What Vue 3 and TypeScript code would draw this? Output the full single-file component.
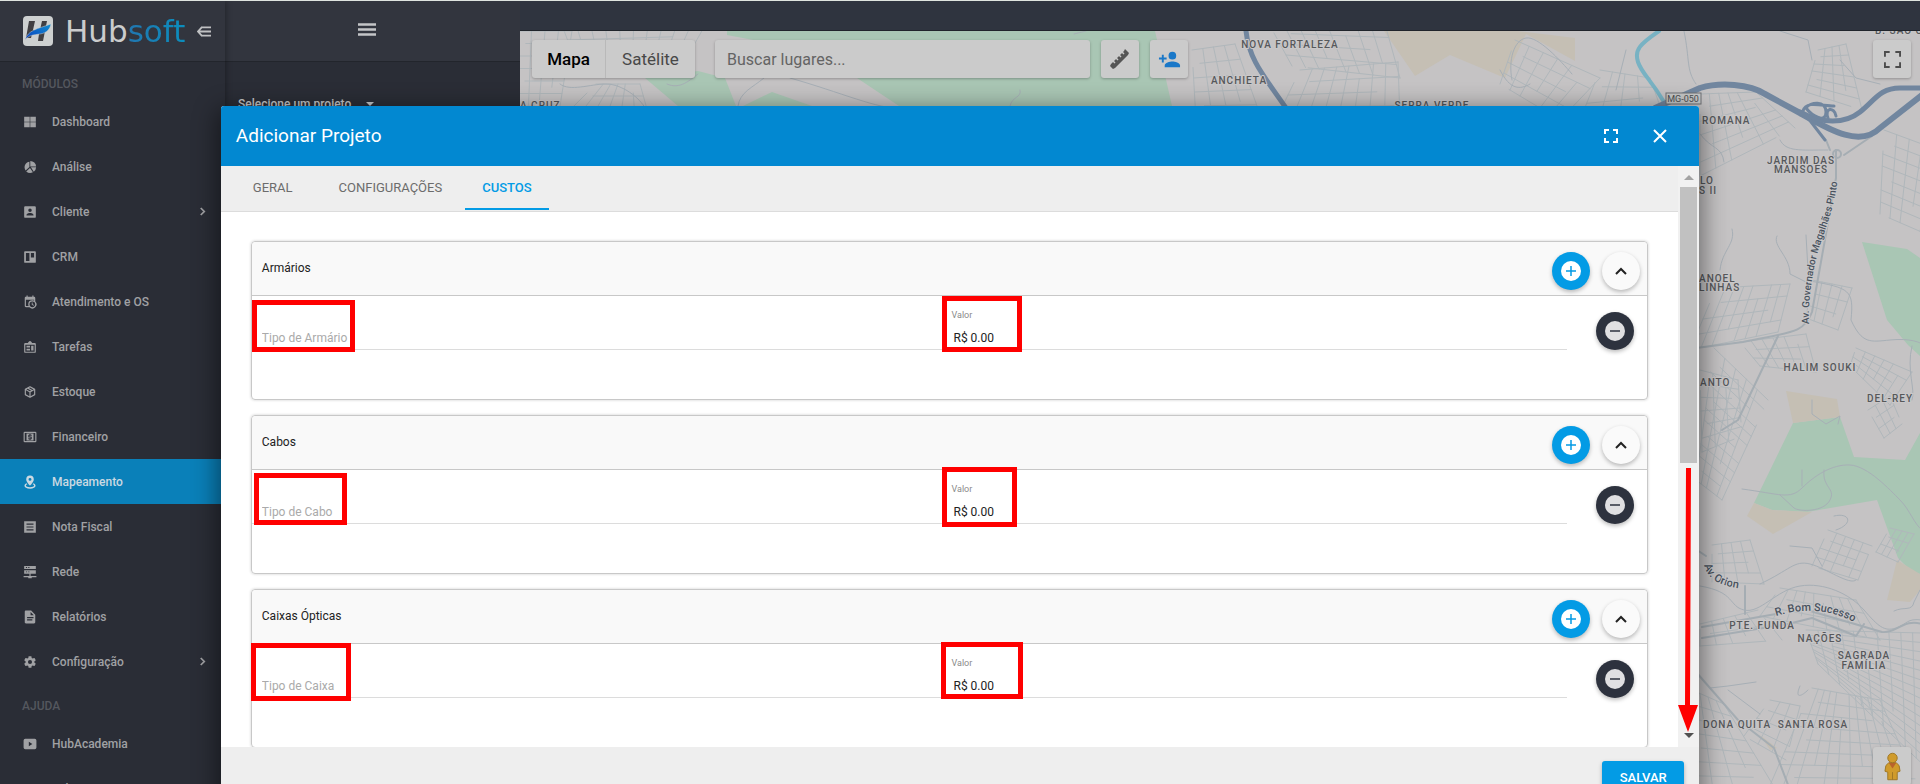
<script setup lang="ts">
import { ref } from 'vue'

interface NavItem { label: string; icon: string; more?: boolean; active?: boolean }
interface Mark { left: number; top: number; width: number; height: number }
interface CostCard { title: string; kind: string; value: string; kindMark: Mark; valueMark: Mark }
type Point = [number, number]
interface Blocks { corners: [Point, Point, Point, Point]; cols: number; rows: number }
interface PlaceLabel { x: number; y: number; text: string; start?: boolean }

const modules: NavItem[] = [
  { label: 'Dashboard', icon: 'M2 3h9.500v8.500H2zM12.500 3H22v8.500h-9.500zM2 12.500h9.500V21H2zM12.500 12.500H22V21h-9.500z' },
  { label: 'Análise', icon: 'M11 3V12L4.500 18A9.500 9.500 0 0 1 11 3zM12.500 1.500A10 10 0 0 1 22.500 11H12.500zM22.500 12.500a10 10 0 0 1-4 7.500L13.500 12.500zM12 13.500L17 21A10 10 0 0 1 5.500 19.500z' },
  { label: 'Cliente', more: true, icon: 'M6 17C6 15 10 13.900 12 13.900S18 15 18 17V18H6M15 9A3 3 0 0 1 12 12A3 3 0 0 1 9 9A3 3 0 0 1 15 9M2 4V20A2 2 0 0 0 4 22H20A2 2 0 0 0 22 20V4A2 2 0 0 0 20 2H4C2.900 2 2 2.900 2 4Z' },
  { label: 'CRM', icon: 'M3.500 2H20.500A1.500 1.500 0 0 1 22 3.500V20.500A1.500 1.500 0 0 1 20.500 22H3.500A1.500 1.500 0 0 1 2 20.500V3.500A1.500 1.500 0 0 1 3.500 2M5 5V19H11V5ZM13.500 5V13H19V5Z' },
  { label: 'Atendimento e OS', icon: 'M15 13H16.500V15.820L18.940 17.230L18.190 18.530L15 16.690V13M19 8H5V19H9.670C9.240 18.090 9 17.070 9 16A7 7 0 0 1 16 9C17.070 9 18.090 9.240 19 9.670V8M5 21C3.890 21 3 20.100 3 19V5C3 3.890 3.890 3 5 3H6V1H8V3H16V1H18V3H19A2 2 0 0 1 21 5V11.100A7 7 0 0 1 11.100 21H5M16 11.150A4.850 4.850 0 0 0 16 20.850A4.850 4.850 0 0 0 16 11.150Z' },
  { label: 'Tarefas', icon: 'M4 5H8.500C9 3.500 10.500 1.500 12 1.500S15 3.500 15.500 5H20A2 2 0 0 1 22 7V20A2 2 0 0 1 20 22H4A2 2 0 0 1 2 20V7A2 2 0 0 1 4 5M4 8V20H20V8ZM6 10H12V13H6ZM6 15H12V18H6ZM14 10H18V18H14Z' },
  { label: 'Estoque', icon: 'M21 16.500C21 16.900 20.800 17.200 20.500 17.400L12.600 21.800C12.200 22.100 11.800 22.100 11.400 21.800L3.500 17.400C3.200 17.200 3 16.900 3 16.500V7.500C3 7.100 3.200 6.800 3.500 6.600L11.400 2.200C11.800 1.900 12.200 1.900 12.600 2.200L20.500 6.600C20.800 6.800 21 7.100 21 7.500ZM12 4.200L10.100 5.200L16 8.600L18 7.500ZM6 7.500L12 10.900L14 9.800L8.100 6.400ZM5 15.900L11 19.300V12.600L5 9.200ZM19 15.900V9.200L13 12.600V19.300Z' },
  { label: 'Financeiro', icon: 'M3 3H21A2 2 0 0 1 23 5V19A2 2 0 0 1 21 21H3A2 2 0 0 1 1 19V5A2 2 0 0 1 3 3M3 5V19H21V5ZM6 6H18V18H6ZM11 7V8H10A1 1 0 0 0 9 9V12A1 1 0 0 0 10 13H13V14H9V16H11V17H13V16H14A1 1 0 0 0 15 15V12A1 1 0 0 0 14 11H11V10H15V8H13V7Z' },
  { label: 'Mapeamento', active: true, icon: 'M12 1A6.500 6.500 0 0 1 18.500 7.500C18.500 12 12 18 12 18S5.500 12 5.500 7.500A6.500 6.500 0 0 1 12 1M12 5A2.500 2.500 0 0 0 12 10A2.500 2.500 0 0 0 12 5M6 14L7.500 16C6 16.500 5 17.500 5 18.500C5 20 8 21 12 21S19 20 19 18.500C19 17.500 18 16.500 16.500 16L18 14C20 15 21.500 16.500 21.500 18.500C21.500 21.500 17.500 23.500 12 23.500S2.500 21.500 2.500 18.500C2.500 16.500 4 15 6 14Z' },
  { label: 'Nota Fiscal', icon: 'M2 2H22V22H2ZM6 6V8H18V6ZM6 11V13H18V11ZM6 16V18H18V16Z' },
  { label: 'Rede', icon: 'M2 1.500H22V7H2ZM5 3.500V5H7V3.500ZM9 3.500V5H11V3.500ZM2 9H22V15H2ZM5 11V12.500H7V11ZM9 11V12.500H11V11ZM11 15H13V19H23V21H15V22.500H9V21H1V19H11Z' },
  { label: 'Relatórios', icon: 'M13 9H18.500L13 3.500V9M5 1H14L21 8V21A2 2 0 0 1 19 23H5C3.890 23 3 22.100 3 21V3C3 1.890 3.890 1 5 1M16 18V16H7V18H16M18 14V12H7V14H18Z' },
  { label: 'Configuração', more: true, icon: 'M12 15.500A3.500 3.500 0 0 1 12 8.500A3.500 3.500 0 0 1 12 15.500M19.430 12.970C19.500 12.330 19.500 11.670 19.430 11L21.540 9.370C21.730 9.220 21.780 8.950 21.660 8.730L19.660 5.270C19.540 5.050 19.270 4.960 19.050 5.050L16.560 6.050C16.040 5.660 15.500 5.320 14.870 5.070L14.500 2.420C14.460 2.180 14.250 2 14 2H10C9.750 2 9.540 2.180 9.500 2.420L9.130 5.070C8.500 5.320 7.960 5.660 7.440 6.050L4.950 5.050C4.730 4.960 4.460 5.050 4.340 5.270L2.340 8.730C2.210 8.950 2.270 9.220 2.460 9.370L4.570 11C4.500 11.670 4.500 12.330 4.570 12.970L2.460 14.630C2.270 14.780 2.210 15.050 2.340 15.270L4.340 18.730C4.460 18.950 4.730 19.030 4.950 18.950L7.440 17.940C7.960 18.340 8.500 18.680 9.130 18.930L9.500 21.580C9.540 21.820 9.750 22 10 22H14C14.250 22 14.460 21.820 14.500 21.580L14.870 18.930C15.500 18.670 16.040 18.340 16.560 17.940L19.050 18.950C19.270 19.030 19.540 18.950 19.660 18.730L21.660 15.270C21.780 15.050 21.730 14.780 21.540 14.630Z' }
]
const help: NavItem[] = [
  { label: 'HubAcademia', icon: 'M4 3H20A3 3 0 0 1 23 6V18A3 3 0 0 1 20 21H4A3 3 0 0 1 1 18V6A3 3 0 0 1 4 3M10 8V16L16 12Z' },
  { label: 'Wiki', icon: 'M4 5H20V20H4ZM7 9V11H17V9ZM7 14V16H14V14Z' }
]
const sections = [
  { title: 'MÓDULOS', items: modules },
  { title: 'AJUDA', items: help }
]

const tabs = ['GERAL', 'CONFIGURAÇÕES', 'CUSTOS']
const currentTab = ref('CUSTOS')
const project = ref('Selecione um projeto')
const place = ref('')

const cards = ref<CostCard[]>([
  { title: 'Armários', kind: 'Tipo de Armário', value: 'R$ 0.00', kindMark: { left: 0, top: 4, width: 103, height: 52 }, valueMark: { left: -7, top: 0, width: 80, height: 56 } },
  { title: 'Cabos', kind: 'Tipo de Cabo', value: 'R$ 0.00', kindMark: { left: 2, top: 3, width: 93, height: 52 }, valueMark: { left: -7, top: -3, width: 75, height: 60 } },
  { title: 'Caixas Ópticas', kind: 'Tipo de Caixa', value: 'R$ 0.00', kindMark: { left: -1, top: -1, width: 100, height: 58 }, valueMark: { left: -8, top: -2, width: 82, height: 57 } }
])
const box = (m: Mark) => ({ left: `${m.left}px`, top: `${m.top}px`, width: `${m.width}px`, height: `${m.height}px` })

/* Street blocks: each quad is divided into a mesh of local roads. */
const blocks: Blocks[] = [
  { corners: [[518, 31], [572, 31], [560, 106], [518, 106]], cols: 4, rows: 6 },
  { corners: [[560, 20], [708, 20], [690, 52], [575, 60]], cols: 10, rows: 4 },
  { corners: [[596, 84], [640, 84], [650, 120], [560, 120]], cols: 6, rows: 3 },
  { corners: [[1192, 50], [1235, 44], [1262, 120], [1196, 120]], cols: 4, rows: 5 },
  { corners: [[1268, 22], [1385, 24], [1400, 78], [1292, 66]], cols: 8, rows: 4 },
  { corners: [[1300, 70], [1398, 62], [1400, 120], [1276, 120]], cols: 8, rows: 4 },
  { corners: [[1515, 40], [1600, 78], [1560, 120], [1500, 84]], cols: 6, rows: 4 },
  { corners: [[1600, 70], [1650, 78], [1660, 106], [1580, 120]], cols: 4, rows: 3 },
  { corners: [[1818, 50], [1846, 44], [1862, 110], [1806, 92]], cols: 4, rows: 6 },
  { corners: [[1700, 94], [1756, 92], [1795, 128], [1700, 176]], cols: 6, rows: 6 },
  { corners: [[1884, 130], [1960, 158], [1940, 240], [1880, 214]], cols: 6, rows: 7 },
  { corners: [[1716, 288], [1790, 284], [1778, 332], [1690, 350]], cols: 8, rows: 4 },
  { corners: [[1812, 280], [1852, 288], [1838, 330], [1806, 318]], cols: 4, rows: 3 },
  { corners: [[1740, 342], [1806, 334], [1816, 372], [1760, 366]], cols: 6, rows: 3 },
  { corners: [[1856, 348], [1912, 372], [1890, 405], [1850, 366]], cols: 6, rows: 4 },
  { corners: [[1714, 348], [1768, 400], [1722, 500], [1696, 480]], cols: 5, rows: 11 },
  { corners: [[1700, 370], [1738, 380], [1742, 436], [1702, 452]], cols: 3, rows: 6 },
  { corners: [[1868, 410], [1890, 396], [1902, 424], [1884, 438]], cols: 3, rows: 3 },
  { corners: [[1712, 545], [1750, 540], [1764, 584], [1712, 582]], cols: 4, rows: 4 },
  { corners: [[1828, 530], [1872, 546], [1858, 580], [1812, 566]], cols: 5, rows: 4 },
  { corners: [[1890, 528], [1914, 534], [1898, 562], [1876, 552]], cols: 4, rows: 3 },
  { corners: [[1780, 588], [1856, 600], [1880, 640], [1760, 616]], cols: 9, rows: 3 },
  { corners: [[1700, 624], [1758, 610], [1782, 640], [1700, 646]], cols: 5, rows: 2 },
  { corners: [[1806, 630], [1960, 634], [1960, 800], [1818, 664]], cols: 13, rows: 14 },
  { corners: [[1812, 688], [1880, 700], [1920, 790], [1768, 790]], cols: 11, rows: 8 },
  { corners: [[1692, 690], [1724, 704], [1776, 790], [1692, 790]], cols: 4, rows: 7 },
  { corners: [[1770, 700], [1800, 706], [1786, 760], [1744, 736]], cols: 3, rows: 4 }
]
const mix = (a: Point, b: Point, t: number): Point => [a[0] + (b[0] - a[0]) * t, a[1] + (b[1] - a[1]) * t]
const line = (a: Point, b: Point) => `M${a[0].toFixed(1)} ${a[1].toFixed(1)}L${b[0].toFixed(1)} ${b[1].toFixed(1)}`
function mesh({ corners: [a, b, c, d], cols, rows }: Blocks): string {
  let path = ''
  for (let i = 0; i <= cols; i++) {
    const cut = (i * 7) % 5 === 0 ? 0.25 : 0
    const top = mix(a, b, i / cols)
    const bottom = mix(d, c, i / cols)
    path += line(mix(top, bottom, cut), mix(top, bottom, (i * 3) % 4 === 1 ? 0.75 : 1))
  }
  for (let j = 0; j <= rows; j++) {
    const from = mix(a, d, j / rows)
    const to = mix(b, c, j / rows)
    path += line(mix(from, to, j % 3 === 1 ? 0.15 : 0), mix(from, to, j % 4 === 2 ? 0.8 : 1))
  }
  return path
}
const streets = blocks.map(mesh).join('')

const lanes = [
  'M560 84C570 92 590 84 606 84S640 98 645 108', 'M667 84C680 90 690 80 698 74', 'M738 106C740 92 752 88 764 78M790 78C840 92 880 110 900 108', 'M1010 106C1012 96 1022 98 1020 90M1074 34L1086 31',
  'M1512 80C1508 60 1514 40 1526 38S1560 60 1572 74M1500 70C1510 90 1520 90 1530 84', 'M1684 31C1690 60 1686 70 1696 84', 'M1780 31L1808 40L1812 60M1840 60L1856 78L1880 84', 'M1626 50L1616 90',
  'M1700 134C1712 150 1722 146 1724 162M1780 140C1786 152 1800 150 1828 150', 'M1732 229C1736 244 1722 250 1720 270M1777 236C1772 246 1790 256 1790 274L1806 282M1806 235L1808 270',
  'M1810 281C1850 288 1854 290 1851 320C1862 344 1870 342 1890 340S1920 342 1926 346', 'M1912 346C1906 370 1916 390 1912 400',
  'M1742 489C1780 494 1790 500 1802 488S1832 464 1850 465S1890 490 1900 500S1914 524 1922 530', 'M1824 470C1822 488 1836 488 1830 500S1800 512 1794 508L1780 495M1802 470V486', 'M1812 400V414L1826 424L1840 416L1838 424',
  'M1760 584C1790 570 1794 560 1810 564S1850 586 1856 580', 'M1834 516C1850 512 1854 524 1836 530M1790 546L1812 548L1822 566', 'M1894 611C1904 606 1912 612 1914 602L1920 590',
  'M1700 586C1736 592 1728 606 1744 610S1776 590 1800 586S1850 594 1864 610S1884 632 1896 628S1906 618 1922 620', 'M1710 688L1728 686L1756 682M1728 690L1760 714M1800 686C1794 700 1802 696 1808 690'
]
const avenues = [
  'M1836 150V178L1812 312C1804 334 1790 332 1743 342L1696 348', 'M1702 627L1776 614M1702 638L1788 624L1812 618L1856 636L1864 624', 'M1745 586V614',
  'M1800 608L1848 622L1882 632C1896 634 1904 618 1922 624', 'M1696 672L1738 720L1774 748L1790 790', 'M1694 548L1706 556', 'M1778 336L1738 420L1722 430', 'M1830 150L1826 140M1844 155L1872 136'
]

const places: PlaceLabel[] = [
  { x: 1290, y: 48, text: 'NOVA FORTALEZA' }, { x: 1239, y: 84, text: 'ANCHIETA' }, { x: 1432, y: 109, text: 'SERRA VERDE' },
  { x: 1702, y: 124, text: 'ROMANA', start: true }, { x: 1801, y: 164, text: 'JARDIM DAS' }, { x: 1801, y: 173, text: 'MANSOES' },
  { x: 1700, y: 184, text: 'LO', start: true }, { x: 1699, y: 194, text: 'S II', start: true }, { x: 1699, y: 282, text: 'ANOEL', start: true },
  { x: 1699, y: 291, text: 'LINHAS', start: true }, { x: 1820, y: 371, text: 'HALIM SOUKI' }, { x: 1700, y: 386, text: 'ANTO', start: true },
  { x: 1890, y: 402, text: 'DEL-REY' }, { x: 1762, y: 629, text: 'PTE. FUNDA' }, { x: 1820, y: 642, text: 'NAÇÕES' },
  { x: 1864, y: 659, text: 'SAGRADA' }, { x: 1864, y: 669, text: 'FAMÍLIA' }, { x: 1737, y: 728, text: 'DONA QUITA' },
  { x: 1813, y: 728, text: 'SANTA ROSA' }, { x: 1875, y: 34, text: 'B. SÃO C', start: true }, { x: 520, y: 109, text: 'A CRUZ', start: true }
]
</script>

<template>
  <div class="app">
    <aside class="sidebar">
      <header class="brand">
        <svg class="brand-mark" viewBox="0 0 30 30" aria-hidden="true">
          <defs>
            <linearGradient id="swoosh" x1="0" y1="1" x2="1" y2="0">
              <stop offset="0" stop-color="#0a3fc0" /><stop offset="1" stop-color="#118fd0" />
            </linearGradient>
          </defs>
          <rect width="30" height="30" rx="4" fill="#cdd0d0" />
          <path d="M6 5H12L10 14H17L19 5H24L20 25H15L16 18H9L8 22H3Z" fill="#403f42" />
          <path d="M2 24C5 14 14 13 28 8C27 13 24 17 17 18S6 19 2 24Z" fill="url(#swoosh)" stroke="#cdd0d0" stroke-width="0.5" />
        </svg>
        <span class="wordmark">Hub<b>soft</b></span>
        <button class="plain fold" aria-label="Recolher menu">
          <svg viewBox="0 0 16 14" width="15" height="13"><path d="M5 2.500H15M1 7H15M5 11.500H15M5.500 2L1 7L5.500 12" fill="none" stroke="currentColor" stroke-width="2" /></svg>
        </button>
      </header>
      <nav>
        <section v-for="section in sections" :key="section.title">
          <h2>{{ section.title }}</h2>
          <a v-for="item in section.items" :key="item.label" href="#" class="nav-item" :class="{ active: item.active }">
            <svg viewBox="0 0 24 24" width="14" height="14" fill="currentColor" fill-rule="evenodd"><path :d="item.icon" /></svg>
            <span>{{ item.label }}</span>
            <svg v-if="item.more" class="more" viewBox="0 0 8 10" width="7" height="9"><path d="M2 1L6 5L2 9" fill="none" stroke="currentColor" stroke-width="2" /></svg>
          </a>
        </section>
      </nav>
    </aside>

    <section class="projects">
      <header>
        <button class="plain" aria-label="Menu">
          <svg viewBox="0 0 18 13" width="18" height="13"><path d="M0 1.500H18M0 6.500H18M0 11.500H18" stroke="currentColor" stroke-width="2.500" /></svg>
        </button>
      </header>
      <div class="picker">
        <select v-model="project" aria-label="Projeto"><option>Selecione um projeto</option></select>
        <svg viewBox="0 0 8 4" width="8" height="4"><path d="M0 0H8L4 4Z" fill="currentColor" /></svg>
      </div>
    </section>

    <main class="workspace">
      <div class="topbar"></div>
      <div class="map">
        <svg class="canvas" viewBox="520 31 1400 753" preserveAspectRatio="xMinYMin slice" aria-label="Mapa">
          <defs>
            <path id="avenue" d="M1809 324C1808 302 1812 270 1820 245C1828 222 1835 204 1838 176V166" />
            <path id="orion" d="M1704 565C1708 578 1716 586 1745 589" />
            <path id="sucesso" d="M1776 616C1800 609 1826 606 1862 626" />
          </defs>
          <rect x="520" y="31" width="1400" height="753" fill="#c5c3c4" />
          <g fill="#a9c6b4">
            <path d="M727 31H1155L1172 106H899L857 78L780 45L727 35Z" />
            <path d="M645 78L698 71L725 78L736 106H678Z" /><path d="M743 106L772 92L812 106Z" />
            <path d="M1862 242L1907 249L1920 258V356L1908 345L1887 320Z" />
            <path d="M1793 423L1840 417L1854 457L1905 460L1920 433V574L1910 570L1898 558L1877 500L1807 512L1772 510L1754 503Z" />
          </g>
          <g fill="#c5bfb4">
            <path d="M1384 31H1517L1575 38V61L1526 34L1505 78L1450 55L1415 76Z" /><path d="M1786 391L1837 399L1840 417L1793 423Z" />
            <path d="M1754 503L1772 510L1812 512L1773 534L1747 516Z" /><path d="M1897 560L1920 574V590L1910 602L1887 600Z" /><path d="M1760 735L1777 748L1770 750Z" />
          </g>
          <g fill="none" stroke-linecap="round" stroke-linejoin="round">
            <path :d="streets" stroke="#b0b7bb" />
            <path v-for="lane in lanes" :key="lane" :d="lane" stroke="#a7afb6" />
            <path v-for="avenue in avenues" :key="avenue" :d="avenue" stroke="#a5adb3" stroke-width="2" />
            <path d="M1659 31C1640 44 1634 50 1638 62S1650 78 1664 102" stroke="#78b2c3" stroke-width="4" />
            <g stroke="#71869f" stroke-width="3">
              <path d="M1246 31C1249 60 1264 76 1286 108" stroke-width="5" />
              <path d="M1655 108L1700 88C1720 82 1750 84 1765 94L1800 113C1830 130 1860 148 1880 128L1922 95" stroke-width="6" />
              <path d="M1800 112C1822 124 1845 124 1860 112S1880 88 1900 88H1922" stroke-width="5" />
              <path d="M1808 118L1825 140M1803 111C1806 100 1822 106 1834 106M1806 108C1812 116 1826 124 1826 112S1810 102 1806 108M1828 118C1824 108 1834 106 1836 116" />
            </g>
          </g>
          <circle cx="1837" cy="154" r="4" fill="none" stroke="#a5adb3" stroke-width="2" />
          <g class="places">
            <text v-for="label in places" :key="label.text" :x="label.x" :y="label.y" :text-anchor="label.start ? 'start' : 'middle'">{{ label.text }}</text>
          </g>
          <g class="roads">
            <text class="long"><textPath href="#avenue">Av. Governador Magalhães Pinto</textPath></text>
            <text><textPath href="#orion">Av. Orion</textPath></text>
            <text><textPath href="#sucesso">R. Bom Sucesso</textPath></text>
          </g>
          <rect x="1666" y="93" width="35" height="11" fill="#c6c7c7" stroke="#6e7174" />
          <text class="shield" x="1683" y="102" text-anchor="middle">MG-050</text>
        </svg>
        <div class="controls">
          <div class="tile kinds"><button class="on">Mapa</button><button>Satélite</button></div>
          <input v-model="place" class="tile search" type="text" placeholder="Buscar lugares..." aria-label="Buscar lugares" />
          <button class="tile square" aria-label="Medir distância">
            <svg viewBox="0 0 22 22" width="22" height="22"><path d="M2 16L15 3L16 1L20 5L19 7L6 20L4 21L1 18Z" fill="#555" /><path d="M4 13L6 15M7 10L9 12M10 7L12 9M13 4L15 6" stroke="#cbcbcb" stroke-width="1.500" /></svg>
          </button>
          <button class="tile square person" aria-label="Adicionar cliente">
            <svg viewBox="0 0 24 24" width="23" height="23" fill="#1a78c8"><path d="M15 14C12.330 14 7 15.330 7 18V20H23V18C23 15.330 17.670 14 15 14M6 10V7H4V10H1V12H4V15H6V12H9V10M15 12A4 4 0 0 0 15 4A4 4 0 0 0 15 12Z" /></svg>
          </button>
          <button class="tile square expand" aria-label="Tela cheia">
            <svg viewBox="0 0 18 18" width="17" height="17"><path d="M1 6V1H6M12 1H17V6M17 12V17H12M6 17H1V12" fill="none" stroke="#4c4c4c" stroke-width="2" /></svg>
          </button>
        </div>
        <button class="tile square pegman" aria-label="Street View">
          <svg viewBox="0 0 18 30" width="17" height="29" fill="#d09b2b" stroke="#9d7624"><path d="M5 11L2 14L1 20L4 21V29H14V21L17 20L16 14L13 11Z" /><path d="M5 11H13L9 17Z" fill="#b9632c" stroke="none" /><path d="M9 21V29" /><circle cx="9" cy="6" r="5" /></svg>
        </button>
      </div>
    </main>

    <div class="layer">
      <section class="dialog" role="dialog" aria-labelledby="dialog-title">
        <header class="dialog-head">
          <h1 id="dialog-title">Adicionar Projeto</h1>
          <button class="plain" aria-label="Maximizar"><svg viewBox="0 0 14 14" width="14" height="14"><path d="M1 5V1H5M9 1H13V5M13 9V13H9M5 13H1V9" fill="none" stroke="#fff" stroke-width="2" /></svg></button>
          <button class="plain" aria-label="Fechar"><svg viewBox="0 0 14 14" width="14" height="14"><path d="M1 1L13 13M13 1L1 13" fill="none" stroke="#fff" stroke-width="2" /></svg></button>
        </header>
        <div class="dialog-body">
          <div class="scroller">
            <div class="tabs" role="tablist">
              <button v-for="tab in tabs" :key="tab" role="tab" :aria-selected="tab === currentTab" :class="{ current: tab === currentTab }" @click="currentTab = tab">{{ tab }}</button>
            </div>
            <div class="cards">
              <article v-for="(card, i) in cards" :key="card.title" class="card">
                <header>
                  <h3>{{ card.title }}</h3>
                  <button class="round add" aria-label="Adicionar"><svg viewBox="0 0 20 20" width="20" height="20"><circle cx="10" cy="10" r="10" fill="#fff" /><path d="M10 5V15M5 10H15" stroke="#039be5" stroke-width="1.500" /></svg></button>
                  <button class="round" aria-label="Recolher"><svg viewBox="0 0 12 8" width="12" height="8"><path d="M1 7L6 2L11 7" fill="none" stroke="#222" stroke-width="2" /></svg></button>
                </header>
                <div class="row">
                  <div class="field">
                    <input type="text" :placeholder="card.kind" :aria-label="card.kind" />
                    <span class="mark" :style="box(card.kindMark)"></span>
                  </div>
                  <div class="field amount">
                    <label :for="`value-${i}`">Valor</label>
                    <input :id="`value-${i}`" v-model="card.value" type="text" />
                    <span class="mark" :style="box(card.valueMark)"></span>
                  </div>
                  <button class="round remove" aria-label="Remover"><svg viewBox="0 0 20 20" width="20" height="20"><circle cx="10" cy="10" r="10" fill="#e0e0e2" /><path d="M5 10H15" stroke="#2d323e" stroke-width="1.500" /></svg></button>
                </div>
              </article>
            </div>
          </div>
          <div class="track" aria-hidden="true">
            <svg viewBox="0 0 10 5" width="10" height="5"><path d="M0 5L5 0L10 5Z" fill="#a3a3a3" /></svg>
            <i class="thumb"></i>
            <svg class="down" viewBox="0 0 10 5" width="10" height="5"><path d="M0 0L5 5L10 0Z" fill="#505050" /></svg>
            <svg class="arrow" viewBox="0 0 20 264" width="20" height="264"><path d="M8 0H13L12 237H20L10 264L0 237H7Z" fill="#f00" /></svg>
          </div>
        </div>
        <footer><button class="save">SALVAR</button></footer>
      </section>
    </div>
  </div>
</template>

<style>
body { margin: 0; overflow: hidden; }
</style>

<style scoped>
* { box-sizing: border-box; }
.app { position: relative; display: flex; height: 100vh; overflow: hidden; border-top: 1px solid #dfe4df; background: #2a2d36; font-family: Roboto, "Liberation Sans", sans-serif; font-size: 13px; color: #a0a1a4; }
button, input, select { font: inherit; border: 0; margin: 0; padding: 0; outline: 0; color: inherit; background: none; border-radius: 0; }
button { cursor: pointer; }
h1, h2, h3 { margin: 0; font-weight: 400; }
.plain { display: flex; align-items: center; justify-content: center; }
.sidebar { flex: 0 0 225px; box-shadow: 1px 0 6px #0005; z-index: 1; }
.brand { display: flex; align-items: center; height: 61px; padding-left: 23px; background: #32353e; border-bottom: 1px solid #22252c; }
.brand-mark { flex: none; width: 30px; height: 30px; }
.wordmark { width: 127px; margin-left: 12px; font: 31px/40px "DejaVu Sans", sans-serif; color: #cbcccd; }
.wordmark b { font-weight: 400; color: transparent; background: linear-gradient(90deg, #2176b0, #0b8ebd); background-clip: text; }
.fold { margin-left: 5px; color: #bfc0c2; }
.sidebar h2 { height: 37px; padding: 13px 22px 0; font-size: 12px; line-height: 18px; font-weight: 500; color: #54575e; }
.nav-item { display: flex; align-items: center; height: 45px; padding: 0 19px 0 23px; color: #a0a1a4; font-size: 12px; font-weight: 500; text-decoration: none; }
.nav-item span { flex: 1; margin-left: 15px; }
.nav-item.active { color: #cbd9e2; background: #0a80b9; }
.projects { flex: 0 0 295px; color: #c4c5c7; }
.projects header { display: flex; justify-content: center; height: 61px; padding: 0 11px 3px 0; background: #32353e; border-bottom: 1px solid #22252c; }
.picker { display: flex; align-items: flex-start; padding: 32px 13px 0; }
.picker select { appearance: none; width: 128px; height: 20px; font-weight: 500; font-size: 12px; }
.picker svg { margin-top: 8px; }
.workspace { flex: 1; min-width: 0; display: flex; flex-direction: column; }
.topbar { height: 30px; background: #2f343f; border-bottom: 1px solid #20242b; }
.map { position: relative; flex: 1; overflow: hidden; background: #c5c3c4; }
.canvas { position: absolute; inset: 0; width: 100%; height: 100%; }
.places text, .roads text { font-size: 10px; font-weight: 500; fill: #56585b; stroke: #c9c7c8; stroke-width: 2px; paint-order: stroke; }
.places text { letter-spacing: 1px; }
.roads text { font-size: 11px; fill: #48525e; }
.roads .long { font-size: 10px; }
.shield { font-size: 9px; fill: #4d4f51; }
.controls { position: relative; display: flex; padding: 9px 9px 0 12px; }
.tile { height: 38px; background: #cbcbcb; border-radius: 3px; box-shadow: 0 1px 3px #0004; }
.kinds { display: flex; width: 163px; font-size: 17px; color: #484848; }
.kinds button { flex: 1; }
.kinds .on { flex: 0 0 74px; border-right: 1px solid #b9b9b9; font-weight: 500; color: #000; }
.search { width: 375px; margin-left: 20px; padding: 0 12px; font-size: 16px; color: #444; }
.search::placeholder { color: #646464; opacity: 1; }
.square { display: flex; align-items: center; justify-content: center; width: 38px; margin-left: 11px; }
.expand { margin-left: auto; }
.pegman { position: absolute; right: 9px; bottom: -1px; }
.layer { position: absolute; inset: 0; overflow: hidden; padding-top: 105px; z-index: 2; }
.dialog { width: 77%; margin: 0 auto; border-radius: 3px; background: #fff; box-shadow: 0 7px 24px 4px #0007; color: #222; }
.dialog-head { display: flex; align-items: center; gap: 35px; height: 60px; padding: 0 32px 0 15px; border-radius: 3px 3px 0 0; background: #0288d1; color: #fff; }
.dialog-head h1 { flex: 1; padding-bottom: 2px; font-size: 19px; }
.dialog-body { display: flex; height: calc(100vh - 203px); }
.scroller { flex: 1; min-width: 0; overflow: hidden; }
.tabs { display: flex; height: 46px; padding-left: 9px; background: #eee; border-bottom: 1px solid #dcdcdc; }
.tabs button { height: 44px; padding: 0 23px; border-bottom: 2px solid transparent; color: #6c6c6c; font-size: 13px; }
.tabs .current { padding: 0 17px; border-color: #039be5; color: #039be5; font-weight: 500; }
.cards { display: grid; gap: 15px; padding: 29px 30px; }
.card { height: 159px; border: 1px solid #c8c8c8; border-radius: 4px; box-shadow: 0 0 3px #0003; }
.card header { display: flex; align-items: center; height: 54px; padding: 4px 7px 0 10px; border-bottom: 1px solid #c8c8c8; background: #f9f9f9; border-radius: 4px 4px 0 0; }
.card h3 { flex: 1; padding-bottom: 5px; font-size: 12px; }
.round { display: flex; align-items: center; justify-content: center; flex: none; width: 38px; height: 38px; border-radius: 50%; background: #fafafa; box-shadow: 0 2px 4px #0004; }
.round.add { margin-right: 12px; background: #039be5; }
.round.remove { align-self: center; justify-self: end; margin: 16px 13px 0 0; background: #2d323e; }
.row { display: grid; grid-template-columns: 50% 1fr 80px; height: 54px; }
.field { position: relative; display: flex; align-items: flex-end; border-bottom: 1px solid #dcdcdc; }
.field input { width: 100%; height: 23px; padding-left: 10px; font-size: 12px; }
.field input::placeholder { color: #aaa; opacity: 1; }
.amount { flex-direction: column; align-items: flex-start; justify-content: space-between; padding: 13px 0 0 2px; }
.amount label { font-size: 9px; line-height: 12px; color: #8a8a8a; }
.amount input { padding-left: 2px; }
.mark { position: absolute; border: 5px solid #f00; pointer-events: none; }
.track { position: relative; display: flex; flex-direction: column; align-items: center; width: 21px; padding: 9px 0; background: #f1f1f1; }
.thumb { width: 17px; height: 276px; margin-top: 7px; background: #c1c1c1; }
.down { margin-top: auto; }
.arrow { position: absolute; right: 1px; top: 302px; }
.dialog footer { display: flex; justify-content: flex-end; height: 60px; padding: 14px 15px 0; background: #eee; }
.save { width: 82px; height: 32px; border-radius: 3px; background: #039be5; color: #fff; font-weight: 500; box-shadow: 0 2px 4px #0004; }
</style>
